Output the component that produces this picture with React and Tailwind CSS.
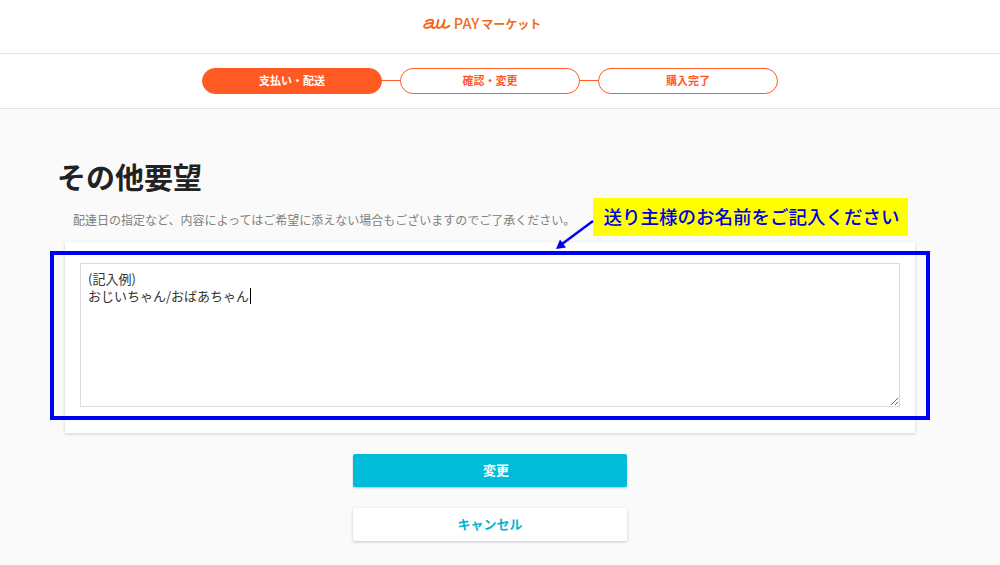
const font = { fontFamily: '"Noto Sans CJK JP", "Noto Sans", sans-serif' };

const steps = ["支払い・配送", "確認・変更", "購入完了"];

const Logo = () => (
  <div className="flex items-center text-[#f26a21]">
    <svg width="28" height="12" viewBox="0 0 28 12" fill="none" stroke="#f26a21" strokeWidth="2" strokeLinecap="round" strokeLinejoin="round">
      <path d="M3 3.4C5.4 1.4 10.6 1 10.2 3.6L9 8C8.6 10 10.2 10.6 12.2 9.4" />
      <path d="M9.8 5C5.2 4.6 1.2 6 1.2 8.4C1.2 10.8 6 10.6 8.8 7.4" />
      <path d="M15.4 2L14 7.6C13.6 10.2 16.2 10.6 18.4 8.8C20 7.4 21 4.4 21.6 2L20.2 7.8C19.8 10.4 23.4 10.6 26.4 7.8" />
    </svg>
    <span className="ml-[3px] text-[14.5px] font-medium leading-none" style={font}>PAY</span>
    <span className="ml-[2px] text-[12px] font-bold leading-none" style={font}>マーケット</span>
  </div>
);

const Stepper = () => (
  <div className="flex h-[55px] items-center justify-center border-b border-[#e2e2e2] bg-white pb-px pr-5">
    {steps.map((s, i) => (
      <div key={s} className="flex items-center">
        {i > 0 && <div className="h-px w-[18px] bg-[#ff5a24]" />}
        <div
          className={`flex h-[26px] w-[180px] items-center justify-center rounded-full border border-[#ff5a24] text-[11px] font-bold ${
            i === 0 ? "bg-[#ff5a24] text-white" : "bg-white text-[#ff5a24]"
          }`}
        >
          {s}
        </div>
      </div>
    ))}
  </div>
);

export default function App() {
  return (
    <div className="relative h-[565px] overflow-hidden bg-[#fafafa]" style={font}>
      <div className="flex h-[54px] items-center justify-center border-b border-[#e2e2e2] bg-white pb-[6px] pr-9">
        <Logo />
      </div>
      <Stepper />

      <main className="w-[980px] px-[65px] pt-[47px]">
        <h1 className="-ml-[8px] text-[29px] font-bold leading-[40px] text-[#222]">その他要望</h1>
        <p className="mt-[14px] pl-2 text-[12px] leading-[20px] text-[#808080]">
          配達日の指定など、内容によってはご希望に添えない場合もございますのでご了承ください。
        </p>

        <div className="mt-[12px] h-[191px] bg-white px-[15px] pt-[21px] shadow-[0_1px_3px_rgba(0,0,0,0.18)]">
          <textarea
            readOnly
            defaultValue={"(記入例)\nおじいちゃん/おばあちゃん"}
            className="block h-[144px] w-[820px] border border-[#dcdcdc] bg-white py-[6px] pl-[7px] pr-2 text-[13px] leading-[17px] text-[#333] outline-none"
          />
        </div>

        <div className="mt-[21px] flex flex-col items-center gap-[21px]">
          <button className="h-[33px] w-[274px] rounded-[2px] bg-[#00bcd8] pb-[2px] pl-3 text-[13px] font-bold text-white shadow-[0_1px_2px_rgba(0,0,0,0.25)]">
            変更
          </button>
          <button className="h-[33px] w-[274px] rounded-[2px] bg-white pb-[2px] text-[13px] font-bold text-[#00b4d2] shadow-[0_1px_3px_rgba(0,0,0,0.22)]">
            キャンセル
          </button>
        </div>
      </main>

      {/* annotation drawn over the screenshot */}
      <div className="absolute left-[250px] top-[288px] h-[16px] w-px bg-black" />
      <div className="pointer-events-none absolute left-[50px] top-[251px] h-[169px] w-[880px] border-4 border-[#0000f0]" />
      <div className="absolute left-[593px] top-[198px] flex h-[38px] w-[315px] items-center justify-center bg-[#ffff00] pl-[2px] text-[18.5px] font-medium text-[#0000e6]">
        送り主様のお名前をご記入ください
      </div>
      <svg className="absolute left-[550px] top-[218px]" width="48" height="36" viewBox="0 0 48 36">
        <path d="M43 3L12 26" stroke="#0000f0" strokeWidth="2.4" />
        <path d="M6 31L10 21.5L16 29.5Z" fill="#0000f0" />
      </svg>
    </div>
  );
}
